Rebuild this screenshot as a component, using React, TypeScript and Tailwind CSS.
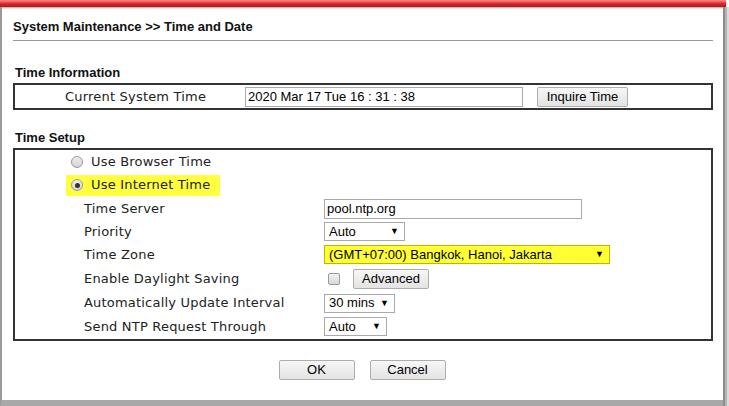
import React from 'react';

const ctl = "font-['Liberation_Sans',Arial,sans-serif] text-[13px] text-black";
const lbl = "font-['DejaVu_Sans',Verdana,sans-serif] text-[13px] tracking-[0.2px] text-[#222] whitespace-nowrap";

function Btn({ children, w }: { children: React.ReactNode; w: string }) {
  return (
    <div
      className={`${ctl} ${w} h-[20px] shrink-0 flex items-center justify-center border border-[#adadad] rounded-[2px] bg-gradient-to-b from-[#f7f7f7] to-[#e3e3e3]`}
    >
      {children}
    </div>
  );
}

function Select({ value, w, yellow = false }: { value: string; w: string; yellow?: boolean }) {
  return (
    <div
      className={`${ctl} ${w} h-[19px] shrink-0 flex items-center justify-between pl-[4px] pr-[5px] border ${
        yellow ? 'bg-[#ffff33] border-[#b8b800]' : 'bg-white border-[#a9a9a9]'
      }`}
    >
      <span className="whitespace-nowrap">{value}</span>
      <span className="text-[9px] leading-none">▼</span>
    </div>
  );
}

function Radio({ checked }: { checked?: boolean }) {
  return (
    <span className="w-[12px] h-[12px] shrink-0 rounded-full border border-[#9a9a9a] bg-gradient-to-b from-[#eeeeee] to-[#d4d4d4] flex items-center justify-center">
      {checked && <span className="w-[5px] h-[5px] rounded-full bg-[#333]" />}
    </span>
  );
}

function Row({ label, h = 'h-[23px]', children }: { label: string; h?: string; children: React.ReactNode }) {
  return (
    <div className={`flex items-center ${h}`}>
      <div className={`${lbl} w-[309px] shrink-0 pl-[69px]`}>{label}</div>
      <div className="flex items-center">{children}</div>
    </div>
  );
}

export default function App() {
  return (
    <div className="w-[729px] h-[406px] bg-white overflow-hidden flex flex-col">
      {/* red window top bar */}
      <div className="h-[7px] w-[726px] bg-gradient-to-b from-[#f28a8a] via-[#e02a2a] to-[#a81818] shadow-[0_1px_2px_rgba(0,0,0,0.35)]" />
      <div className="flex-1 flex">
        <div className="flex-1 flex flex-col border-l-2 border-[#9a9a9a] border-b-[6px] border-b-[#a8a8a8]">
          <div className="pl-[11px] pr-[10px]">
            <div className="font-['Liberation_Sans',Arial,sans-serif] font-bold text-[13px] text-[#111] h-[33px] pt-[11px] leading-[17px]">
              System Maintenance &gt;&gt; Time and Date
            </div>
            <div className="border-t border-[#9a9a9a]" />

            <div className="font-['Liberation_Sans',Arial,sans-serif] font-bold text-[13px] text-[#111] mt-[23px] h-[17px] leading-[17px] pl-[2px]">
              Time Information
            </div>
            <div className="mt-[2px] border-2 border-[#333] h-[27px] flex items-center">
              <div className={`${lbl} w-[230px] shrink-0 pl-[50px]`}>Current System Time</div>
              <div className={`${ctl} w-[278px] h-[20px] shrink-0 border border-[#a9a9a9] flex items-center pl-[2px]`}>
                2020 Mar 17 Tue 16 : 31 : 38
              </div>
              <div className="ml-[14px]">
                <Btn w="w-[91px]">Inquire Time</Btn>
              </div>
            </div>

            <div className="font-['Liberation_Sans',Arial,sans-serif] font-bold text-[13px] text-[#111] mt-[19px] h-[17px] leading-[17px] pl-[2px]">
              Time Setup
            </div>
            <div className="mt-[2px] border-2 border-[#333] pb-[1px]">
              <div className="flex items-center h-[23px] pl-[56px] gap-[8px]">
                <Radio />
                <span className={lbl}>Use Browser Time</span>
              </div>
              <div className="flex items-center h-[24px]">
                <div className="ml-[51px] bg-[#ffff40] h-[21px] w-[154px] flex items-center pl-[5px] gap-[8px]">
                  <Radio checked />
                  <span className={lbl}>Use Internet Time</span>
                </div>
              </div>
              <Row label="Time Server">
                <div className={`${ctl} w-[258px] h-[20px] shrink-0 border border-[#a9a9a9] flex items-center pl-[2px]`}>
                  pool.ntp.org
                </div>
              </Row>
              <Row label="Priority">
                <Select value="Auto" w="w-[81px]" />
              </Row>
              <Row label="Time Zone">
                <Select value="(GMT+07:00) Bangkok, Hanoi, Jakarta" w="w-[286px]" yellow />
              </Row>
              <Row label="Enable Daylight Saving" h="h-[25px]">
                <span className="ml-[4px] w-[12px] h-[12px] shrink-0 rounded-[2px] border border-[#9a9a9a] bg-gradient-to-b from-[#f2f2f2] to-[#d8d8d8]" />
                <div className="ml-[13px]">
                  <Btn w="w-[76px]">Advanced</Btn>
                </div>
              </Row>
              <Row label="Automatically Update Interval" h="h-[24px]">
                <Select value="30 mins" w="w-[71px]" />
              </Row>
              <Row label="Send NTP Request Through">
                <Select value="Auto" w="w-[63px]" />
              </Row>
            </div>

            <div className="flex justify-center gap-[15px] mt-[19px] pr-[2px]">
              <Btn w="w-[76px]">OK</Btn>
              <Btn w="w-[76px]">Cancel</Btn>
            </div>
          </div>
        </div>
        {/* right shadow edge */}
        <div className="w-[6px] flex">
          <div className="w-[2px] bg-[#8c8c8c]" />
          <div className="w-[2px] bg-[#b4b4b4]" />
          <div className="w-[2px] bg-[#dcdcdc]" />
        </div>
      </div>
    </div>
  );
}
